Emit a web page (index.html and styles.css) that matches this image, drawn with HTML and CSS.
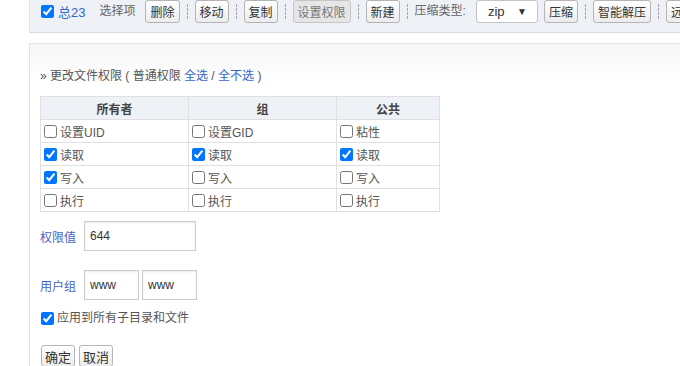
FILE: index.html
```html
<!DOCTYPE html>
<html lang="zh-CN">
<head>
    <meta charset="UTF-8">
    <title>文件权限</title>
    <link rel="stylesheet" href="styles.css">
</head>
<body>
    <div class="page">
        <div class="toolbar">
            <label class="total"><input type="checkbox" checked><span class="link">总23</span></label>
            <span class="tb-text">选择项</span>
            <button class="btn">删除</button>
            <span class="sep"></span>
            <button class="btn">移动</button>
            <span class="sep"></span>
            <button class="btn">复制</button>
            <span class="sep"></span>
            <button class="btn disabled">设置权限</button>
            <span class="sep"></span>
            <button class="btn">新建</button>
            <span class="sep"></span>
            <span class="tb-text">压缩类型:</span>
            <span class="select">zip <span class="arrow">▼</span></span>
            <button class="btn">压缩</button>
            <span class="sep"></span>
            <button class="btn">智能解压</button>
            <span class="sep"></span>
            <button class="btn">远程下载</button>
        </div>

        <div class="panel">
            <p class="title">» 更改文件权限 ( 普通权限 <a href="#">全选</a> / <a href="#">全不选</a> )</p>

            <table class="perm">
                <tr>
                    <th class="col-owner">所有者</th>
                    <th class="col-group">组</th>
                    <th class="col-public">公共</th>
                </tr>
                <tr>
                    <td><label><input type="checkbox">设置UID</label></td>
                    <td><label><input type="checkbox">设置GID</label></td>
                    <td><label><input type="checkbox">粘性</label></td>
                </tr>
                <tr>
                    <td><label><input type="checkbox" checked>读取</label></td>
                    <td><label><input type="checkbox" checked>读取</label></td>
                    <td><label><input type="checkbox" checked>读取</label></td>
                </tr>
                <tr>
                    <td><label><input type="checkbox" checked>写入</label></td>
                    <td><label><input type="checkbox">写入</label></td>
                    <td><label><input type="checkbox">写入</label></td>
                </tr>
                <tr>
                    <td><label><input type="checkbox">执行</label></td>
                    <td><label><input type="checkbox">执行</label></td>
                    <td><label><input type="checkbox">执行</label></td>
                </tr>
            </table>

            <div class="field field-mode">
                <span class="field-label">权限值</span>
                <input type="text" class="text mode" value="644">
            </div>

            <div class="field field-owner">
                <span class="field-label">用户组</span>
                <input type="text" class="text short" value="www">
                <input type="text" class="text short" value="www">
            </div>

            <label class="recursive"><input type="checkbox" checked>应用到所有子目录和文件</label>

            <div class="actions">
                <button class="btn">确定</button>
                <button class="btn">取消</button>
            </div>
        </div>
    </div>
</body>
</html>
```

FILE: styles.css
```css
body {
    margin: 0;
    font-family: "Liberation Sans", "Noto Sans CJK SC", sans-serif;
    font-size: 12px;
    color: #555;
    background: #fff;
    overflow: hidden;
}
.page {
    padding-left: 29px;
}
.toolbar {
    display: flex;
    align-items: flex-start;
    height: 31px;
    margin-top: -4px;
    padding: 4px 0 1px 10px;
    background-color: #eef1f5;
    border-left: 1px solid #dcdfe3;
    border-bottom: 1px solid #d8dbe0;
    white-space: nowrap;
}
.toolbar > * {
    flex-shrink: 0;
}
.total {
    display: flex;
    align-items: center;
    height: 23px;
    margin-right: 14px;
}
.total input {
    margin: 0 4px 0 1px;
}
.link,
a {
    color: #3366cc;
    text-decoration: none;
}
.total .link {
    font-size: 13px;
}
.tb-text {
    line-height: 23px;
    color: #666;
    margin-right: 10px;
}
.btn {
    height: 23px;
    padding: 0 4px;
    font-family: inherit;
    font-size: 12px;
    color: #333;
    background: linear-gradient(to bottom, #fff, #ececec);
    border: 1px solid #b5b5b5;
    border-radius: 3px;
}
.btn.disabled {
    color: #777;
    background: #e6e6e6;
    border-color: #c5c5c5;
}
.sep {
    width: 0;
    height: 15px;
    margin: 4px 7px 0 7px;
    border-left: 1px dashed #a9a0b4;
}
.select {
    display: flex;
    justify-content: space-between;
    box-sizing: border-box;
    width: 62px;
    height: 23px;
    line-height: 21px;
    padding: 0 10px 0 11px;
    margin-right: 6px;
    color: #333;
    font-size: 13px;
    background: #fff;
    border: 1px solid #c4c4c4;
    border-radius: 3px;
}
.arrow {
    font-size: 10px;
}
.panel {
    margin-top: 10px;
    padding: 24px 0 30px 10px;
    height: 330px;
    border-top: 1px solid #e2e2e2;
    border-left: 1px solid #e2e2e2;
    background: linear-gradient(to bottom, #f6f6f6, #fff 40px);
}
.title {
    margin: 0 0 12px;
    line-height: 16px;
}
.perm {
    border-collapse: collapse;
    width: 400px;
}
.perm th,
.perm td {
    height: 22px;
    padding: 0 3px;
    border: 1px solid #e0e0e0;
}
.perm th {
    background-color: #eef1f5;
    color: #444;
    font-weight: bold;
    text-align: center;
}
.col-owner { width: 141px; }
.col-group { width: 141px; }
.perm label,
.recursive {
    display: flex;
    align-items: center;
}
.perm input,
.recursive input {
    width: 13px;
    height: 13px;
    margin: 0 3px 0 0;
}
.field {
    display: flex;
    align-items: center;
}
.field-mode {
    margin-top: 9px;
}
.field-owner {
    margin-top: 19px;
}
.field-label {
    width: 44px;
    color: #4a63c9;
    font-size: 12px;
}
.text {
    box-sizing: border-box;
    height: 30px;
    padding: 0 5px;
    font-family: inherit;
    font-size: 12px;
    color: #333;
    border: 1px solid #ccc;
    box-shadow: inset 0 1px 2px rgba(0, 0, 0, 0.08);
}
.mode {
    width: 112px;
}
.short {
    width: 55px;
    margin-right: 3px;
}
.recursive {
    margin-top: 10px;
    line-height: 16px;
}
.recursive input {
    margin-left: 1px;
}
.actions {
    display: flex;
    gap: 4px;
    margin-top: 19px;
    margin-left: 1px;
}
.actions .btn {
    height: 22px;
    padding: 0 3px;
    font-size: 13px;
}
```
